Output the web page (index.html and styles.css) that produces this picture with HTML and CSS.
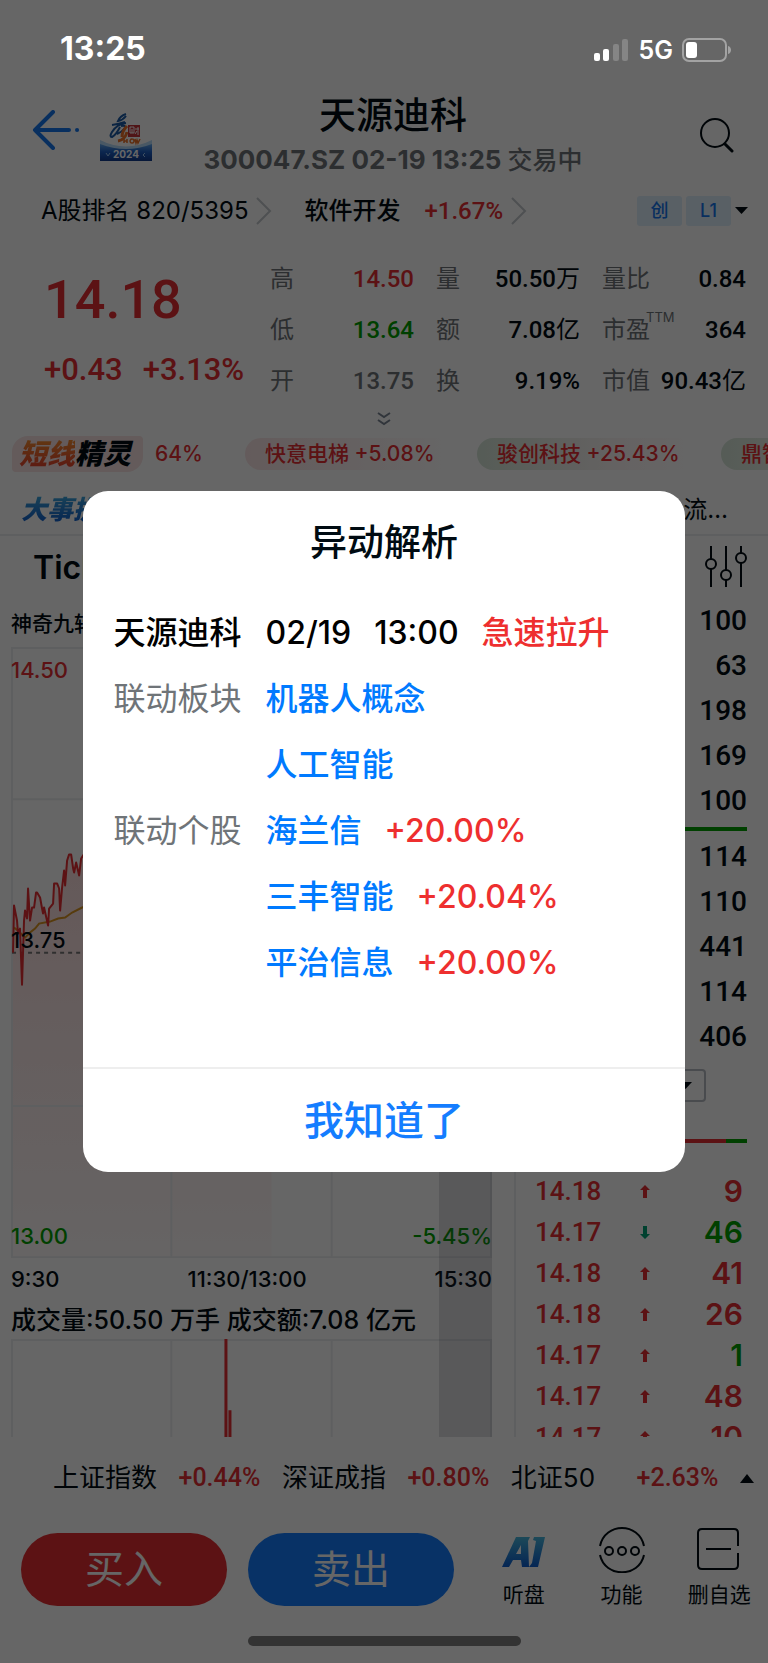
FILE: index.html
```html
<!DOCTYPE html>
<html lang="zh-CN">
<head>
<meta charset="utf-8">
<meta name="viewport" content="width=device-width, initial-scale=1">
<title>天源迪科</title>
<link rel="stylesheet" href="styles.css">
</head>
<body>
<div class="app">
  <div class="statusbar">
    <span class="clock">13:25</span>
    <span class="status-icons">
      <svg class="signal" width="36" height="24" viewBox="0 0 36 24"><g fill="#fff"><rect x="0" y="15" width="6" height="8" rx="2"/><rect x="9" y="11" width="6" height="12" rx="2"/></g><g fill="#858585"><rect x="19" y="6" width="6" height="17" rx="2"/><rect x="28" y="1" width="6" height="22" rx="2"/></g></svg>
      <span class="network">5G</span>
      <svg width="50" height="24" viewBox="0 0 50 24"><rect x="1" y="1" width="43" height="22" rx="6" fill="none" stroke="#a3a3a3" stroke-width="2"/><rect x="4" y="4" width="11" height="16" rx="3" fill="#fff"/><path d="M46 8c4 1 4 7 0 8z" fill="#a3a3a3"/></svg>
    </span>
  </div>

  <header class="header">
    <div class="header-left">
      <button class="icon-btn" aria-label="返回"><svg width="50" height="40" viewBox="0 0 50 40" fill="none" stroke="#1677ee" stroke-width="4" stroke-linecap="round" stroke-linejoin="round"><path d="M21 2 3 20l18 18M3 20h34M45 20h.1"/></svg></button>
      <svg class="logo" width="52" height="48" viewBox="0 0 52 48">
        <defs><linearGradient id="lg" x1="0" y1="0" x2="0" y2="1"><stop offset="0" stop-color="#69aef0"/><stop offset=".5" stop-color="#1d5fc4"/><stop offset="1" stop-color="#123a8c"/></linearGradient></defs>
        <path d="M0 30q26 10 52 0v18H0z" fill="url(#lg)"/><path d="M0 27q26 13 52 0v4q-26 10-52 0z" fill="#b7dbfa"/>
        <path d="M26 1q-6 2-8 7 5-1 8-5M12 12q7-1 13-3M26 10q-9 1-14 9-3 5 0 5 4-2 8-10M21 13q5-1 4 2-3 4-8 6" fill="none" stroke="#1d5ba5" stroke-width="2"/>
        <path d="M27 13q-5 5-5 11M18 28q7-1 9-9" fill="none" stroke="#ed7128" stroke-width="3"/>
        <rect x="28" y="12" width="12" height="12" fill="#c9353b"/><path d="M30 14h4v6h-4zM32 16v4M35 16h4M38 14v8M37 18l-2 3" fill="none" stroke="#fff" stroke-width="1"/>
        <path d="M24 26v4M24 28h3M27 26v4M32 26a2 2 0 1 0 .1 0M35 26l1 4 1-3 1 3 2-4" fill="none" stroke="#ed7128" stroke-width="1.500"/>
        <text x="26" y="45" text-anchor="middle" class="logo-year">2024</text><path d="m6 40 2 3 2-3M45 40l-2 2 2 2" stroke="#9cc6f2" fill="none"/>
      </svg>
    </div>
    <div class="heading">
      <h1>天源迪科</h1>
      <p>300047.SZ 02-19 13:25 <span>交易中</span></p>
    </div>
    <div class="header-right"><button class="icon-btn" aria-label="搜索"><svg width="36" height="36" viewBox="0 0 36 36" fill="none" stroke="#000b12"><circle cx="16" cy="16" r="14" stroke-width="2"/><path d="m26 27 7 7" stroke-width="3" stroke-linecap="round"/></svg></button></div>
  </header>

  <div class="rank">
    <a class="link" href="#">A股排名 820/5395</a>
    <svg class="chev" width="16" height="28" viewBox="0 0 16 28"><path d="m1 1 13 13L1 27"/></svg>
    <a class="link sector" href="#">软件开发</a>
    <b class="num red sector-chg">+1.67%</b>
    <svg class="chev" width="16" height="28" viewBox="0 0 16 28"><path d="m1 1 13 13L1 27"/></svg>
    <span class="tags"><span class="tag">创</span><span class="tag">L1</span><svg width="13" height="8" viewBox="0 0 13 8"><path d="M0 0h13L6.500 7z" fill="#000b12"/></svg></span>
  </div>

  <section class="quote">
    <div class="price">
      <strong class="num last">14.18</strong>
      <div class="num change"><span>+0.43</span><span>+3.13%</span></div>
    </div>
    <dl class="stats">
      <dt>高</dt><dd class="num red">14.50</dd><dt>量</dt><dd><span class="num">50.50</span>万</dd><dt>量比</dt><dd class="num">0.84</dd>
      <dt>低</dt><dd class="num green">13.64</dd><dt>额</dt><dd><span class="num">7.08</span>亿</dd><dt>市盈<sup>TTM</sup></dt><dd class="num">364</dd>
      <dt>开</dt><dd class="num grey">13.75</dd><dt>换</dt><dd class="num">9.19%</dd><dt>市值</dt><dd><span class="num">90.43</span>亿</dd>
    </dl>
  </section>
  <div class="expand"><svg width="14" height="14" viewBox="0 0 14 14" fill="none" stroke="#7b8694" stroke-width="2"><path d="m1 1 6 4 6-4M1 8l6 4 6-4"/></svg></div>

  <div class="ticker">
    <span class="spirit"><span><i>短线</i>精灵</span></span>
    <span class="pill first">64%</span>
    <span class="pill pink">快意电梯 +5.08%</span>
    <span class="pill mint">骏创科技 +25.43%</span>
    <span class="pill mint">鼎智</span>
  </div>
  <div class="events"><span class="events-name">大事提醒</span><span class="events-text">流…</span></div>

  <main class="board">
    <section class="chart">
      <h2>Tick</h2>
      <p class="indicator">神奇九转</p>
      <div class="plots">
        <svg class="plot" viewBox="0 0 480 610">
          <defs><linearGradient id="area" x1="0" y1="0" x2="0" y2="1"><stop offset="0" stop-color="#fbdcdc"/><stop offset="1" stop-color="#fffafa"/></linearGradient></defs>
          <path d="M2 305 3 258 6 273 7 286 9 281 11 300 13 273 14 263 16 271 17 241 19 273 21 260 23 260 25 245 29 250 32 266 33 260 37 278 38 261 42 256 43 236 46 236 49 263 51 240 53 223 54 238 56 213 58 207 60 207 63 225 65 215 68 228 70 211 90 190 150 200 260 215V609H2z" fill="url(#area)"/>
          <path d="M1 1h478v608H1zM1 152h478M1 458h478M160 1v608M320 1v608" fill="none" stroke="#eceef0" stroke-width="2"/>
          <path d="M1 305h478" stroke="#777" stroke-width="2" stroke-dasharray="4 4"/>
          <path d="M3 280 7 283 14 290 19 285 24 281 28 276 39 274 47 271 54 270 61 265 71 260 84 256" fill="none" stroke="#d99421" stroke-width="2"/>
          <path d="M2 305 3 258 6 273 7 286 9 281 11 337 13 273 14 263 16 271 17 241 19 273 21 260 23 260 25 245 26 245 29 250 31 261 32 266 33 260 37 278 38 261 42 256 43 236 46 236 48 241 49 263 51 240 53 223 54 238 56 213 58 207 60 207 62 221 63 225 65 215 68 228 70 211 74 205" fill="none" stroke="#e52f33" stroke-width="2" stroke-linejoin="round"/>
        </svg>
        <span class="mark top-left">14.50</span><span class="mark middle">13.75</span><span class="mark bottom-left">13.00</span><span class="mark bottom-right">-5.45%</span>
      </div>
      <div class="axis"><span>9:30</span><span>11:30/13:00</span><span>15:30</span></div>
      <p class="volume-title">成交量:50.50 万手 成交额:7.08 亿元</p>
      <svg class="plot" viewBox="0 0 480 108"><path d="M1 108V1h478v107M160 1v107M320 1v107" fill="none" stroke="#eceef0" stroke-width="2"/><path d="M213 0h3v108h-3zM217 71h3v37h-3z" fill="#e52f33"/></svg>
      <div class="after-hours"></div>
    </section>
    <section class="orders">
      <div class="tools"><button class="icon-btn" aria-label="设置"><svg width="42" height="42" viewBox="0 0 42 42" fill="none" stroke="#000b12" stroke-width="2"><circle cx="6" cy="18" r="5"/><circle cx="21" cy="29" r="5"/><circle cx="36" cy="12" r="5"/><path d="M6 0v13M6 23v18M21 0v24M21 34v7M36 0v7M36 17v24"/></svg></button></div>
      <ul class="depth num"><li>100</li><li>63</li><li>198</li><li>169</li><li>100</li></ul>
      <div class="rule"></div>
      <ul class="depth num"><li>114</li><li>110</li><li>441</li><li>114</li><li>406</li></ul>
      <div class="filter"><button aria-label="切换"><svg width="13" height="8" viewBox="0 0 13 8"><path d="M0 0h13L6.500 7z" fill="#000b12"/></svg></button></div>
      <div class="ratio"></div>
      <table class="trades">
        <tr><td class="num">14.18</td><td><svg class="arrow" viewBox="0 0 10 13"><path d="M5 0l5 5H7v8H3V5H0z"/></svg></td><td>9</td></tr>
        <tr class="sell"><td class="num">14.17</td><td><svg class="arrow" viewBox="0 0 10 13"><path d="M5 13l5-5H7V0H3v8H0z"/></svg></td><td>46</td></tr>
        <tr><td class="num">14.18</td><td><svg class="arrow" viewBox="0 0 10 13"><path d="M5 0l5 5H7v8H3V5H0z"/></svg></td><td>41</td></tr>
        <tr><td class="num">14.18</td><td><svg class="arrow" viewBox="0 0 10 13"><path d="M5 0l5 5H7v8H3V5H0z"/></svg></td><td>26</td></tr>
        <tr><td class="num">14.17</td><td><svg class="arrow" viewBox="0 0 10 13"><path d="M5 0l5 5H7v8H3V5H0z"/></svg></td><td class="green">1</td></tr>
        <tr><td class="num">14.17</td><td><svg class="arrow" viewBox="0 0 10 13"><path d="M5 0l5 5H7v8H3V5H0z"/></svg></td><td>48</td></tr>
        <tr><td class="num">14.17</td><td><svg class="arrow" viewBox="0 0 10 13"><path d="M5 0l5 5H7v8H3V5H0z"/></svg></td><td>10</td></tr>
      </table>
    </section>
  </main>

  <div class="indices">
    <span>上证指数</span><b class="num red">+0.44%</b><span>深证成指</span><b class="num red">+0.80%</b><span class="short-name">北证50</span><b class="num red">+2.63%</b>
    <svg width="14" height="9" viewBox="0 0 14 9"><path d="M0 9h14L7 0z" fill="#000b12"/></svg>
  </div>

  <footer class="actions">
    <button class="trade buy">买入</button>
    <button class="trade short">卖出</button>
    <button class="tool">
      <svg width="46" height="46" viewBox="0 0 46 46"><defs><linearGradient id="ai" x1="0" y1="0" x2="0" y2="1"><stop offset="0" stop-color="#49b7dd"/><stop offset="1" stop-color="#0c5ed2"/></linearGradient></defs><path d="M15 10h14l-2 4 1 26h-7l-1-7h-8l-4 7H1zM20 18l-5 9h5zM33 10h11l-7 30H28l3-4 4-22-3-1z" fill="url(#ai)" fill-rule="evenodd"/></svg>
      听盘</button>
    <button class="tool">
      <svg width="46" height="46" viewBox="0 0 46 46" fill="none" stroke="#000b12" stroke-width="2"><path d="M1 19C6-5 40-5 45 19M1 28c5 23 39 23 44 0"/><circle cx="10" cy="24" r="4"/><circle cx="23" cy="24" r="4"/><circle cx="36" cy="24" r="4"/></svg>
      功能</button>
    <button class="tool">
      <svg width="46" height="46" viewBox="0 0 46 46" fill="none" stroke="#000b12" stroke-width="2"><path d="M42 19V6q0-4-4-4H6Q2 2 2 6v32q0 4 4 4h32q4 0 4-4V26M10 22h25"/></svg>
      删自选</button>
  </footer>
  <div class="home"><span></span></div>

  <div class="scrim">
    <div class="dialog" role="dialog" aria-modal="true" aria-labelledby="dialog-title">
      <h2 id="dialog-title">异动解析</h2>
      <div class="details">
        <span>天源迪科</span><p><span>02/19</span><span>13:00</span><span class="alert">急速拉升</span></p>
        <span class="label">联动板块</span><p><a href="#">机器人概念</a></p>
        <p class="wide"><a href="#">人工智能</a></p>
        <span class="label">联动个股</span><p><a href="#">海兰信</a><span class="alert">+20.00%</span></p>
        <p class="wide"><a href="#">三丰智能</a><span class="alert">+20.04%</span></p>
        <p class="wide"><a href="#">平治信息</a><span class="alert">+20.00%</span></p>
      </div>
      <button class="confirm">我知道了</button>
    </div>
  </div>
</div>
</body>
</html>
```
FILE: styles.css
```css
* { box-sizing: border-box; }
body, h1, h2, p, dl, dd, ul { margin: 0; padding: 0; }
body {
  font-family: Inter, "Noto Sans CJK SC", sans-serif;
  line-height: 1.2;
  color: #000b12;
  background: #fff;
}
button { font: inherit; color: inherit; background: none; border: 0; padding: 0; }
a { color: inherit; text-decoration: none; }
ul { list-style: none; }
svg { display: block; flex: none; }
.num { font-family: Roboto, sans-serif; font-weight: 500; }
.red { color: #e52f33; }
.green { color: #00a000; }
.grey { color: #6f7478; }

.app {
  position: relative;
  display: flex;
  flex-direction: column;
  height: 100vh;
  overflow: hidden;
}

.statusbar {
  position: relative;
  z-index: 2;
  display: flex;
  justify-content: space-between;
  align-items: center;
  height: 96px;
  padding: 3px 36px 0 60px;
  color: #fff;
}
.clock { font-size: 32px; font-weight: 700; }
.status-icons { display: flex; align-items: center; gap: 9px; }
.network { font-size: 25px; font-weight: 600; }

.header { display: grid; grid-template-columns: 158px 1fr 140px; height: 84px; }
.header-left { display: flex; align-items: center; gap: 18px; padding: 0 0 16px 32px; }
.header-left .logo { margin-top: 14px; }
.logo-year { font: 700 10px Inter, sans-serif; fill: #fff; }
.heading { display: flex; flex-direction: column; align-items: center; white-space: nowrap; }
.heading h1 { font-size: 37px; line-height: 40px; font-weight: 500; }
.heading p { padding-top: 6px; font-size: 26px; line-height: 36px; font-weight: 700; color: #6f7478; }
.heading p span { font-size: 25px; font-weight: 500; }
.header-right { display: flex; justify-content: flex-end; align-items: center; padding: 0 33px 6px 0; }

.rank { display: flex; align-items: center; height: 62px; padding: 0 20px 0 41px; font-size: 24px; white-space: nowrap; }
.chev { margin-left: 8px; fill: none; stroke: #c3c8cd; stroke-width: 2; }
.sector { margin-left: 32px; font-weight: 500; }
.sector-chg { margin-left: 24px; }
.tags { display: flex; align-items: center; gap: 4px; margin-left: auto; }
.tag { width: 45px; background: #deeffd; border-radius: 3px; color: #1677ee; text-align: center; font-size: 18px; line-height: 30px; font-weight: 500; }

.quote { display: flex; height: 164px; padding: 12px 22px 0 44px; }
.price { display: flex; flex-direction: column; width: 226px; color: #e52f33; }
.last { padding-top: 6px; font-size: 54px; line-height: 80px; }
.change { display: flex; gap: 20px; padding-top: 4px; font-size: 31px; line-height: 52px; }
.stats { flex: 1; display: grid; grid-template-columns: 24px 120px 46px 120px 70px 1fr; grid-auto-rows: 51px; align-items: center; font-size: 24px; white-space: nowrap; }
.stats dt { position: relative; justify-self: end; color: #6f7478; }
.stats dd { text-align: right; }
.stats sup { position: absolute; left: 44px; top: -5px; font-size: 13px; line-height: 13px; }
.expand { display: flex; justify-content: center; padding: 6px 0 10px; }

.ticker { display: flex; align-items: center; height: 36px; padding-left: 12px; font-size: 21px; font-weight: 500; white-space: nowrap; color: #e52f33; }
.spirit { flex: none; width: 131px; line-height: 36px; padding-left: 7px; background: #f9e3e3; border-radius: 16px 4px 16px 4px; font-size: 28px; font-weight: 900; color: #000b12; }
.spirit span { display: inline-block; font-style: italic; }
.spirit i { color: transparent; background: linear-gradient(#f5912f, #e5382c); background-clip: text; }
.pill { flex: none; display: inline-block; line-height: 32px; padding: 0 20px; border-radius: 16px 0 0 16px; }
.first { width: 88px; padding: 0 0 0 12px; margin-right: 14px; }
.pink { width: 232px; background: linear-gradient(90deg, #fae4e5, #fff 88%); }
.mint { width: 244px; background: linear-gradient(90deg, #d6e6d8, #fdf6f6 60%, #fff 88%); }

.events { display: flex; justify-content: space-between; align-items: center; height: 64px; padding: 15px 40px 1px 21px; border-bottom: 2px solid #eceef0; font-size: 24px; }
.events-name { font-size: 26px; font-style: italic; font-weight: 900; color: transparent; background: linear-gradient(#3fa9dc, #0c55c8); background-clip: text; }

.board { flex: 1; min-height: 0; display: flex; overflow: hidden; }
.chart { position: relative; flex: 1; padding: 0 22px 0 11px; border-right: 2px solid #eceef0; }
.chart h2 { padding-left: 22px; font-size: 32px; line-height: 64px; font-weight: 600; }
.indicator { font-size: 21px; line-height: 47px; font-weight: 500; }
.plots { position: relative; }
.plot { width: 100%; height: auto; }
.mark { position: absolute; font-size: 22px; line-height: 24px; font-weight: 500; }
.top-left { left: 0; top: 11px; color: #e52f33; }
.middle { left: 0; top: 281px; }
.bottom-left { left: 0; bottom: 10px; color: #00a000; }
.bottom-right { right: 0; bottom: 10px; color: #00a000; }
.axis { display: flex; justify-content: space-between; font-size: 22px; line-height: 43px; font-weight: 500; }
.volume-title { font-size: 25px; line-height: 38px; font-weight: 500; white-space: nowrap; }
.after-hours { position: absolute; top: 112px; bottom: 0; right: 22px; width: 53px; background: rgba(70, 70, 95, .18); }

.orders { width: 252px; flex: none; padding: 10px 21px 0 19px; }
.tools { display: flex; justify-content: flex-end; align-items: flex-start; height: 52px; }
.depth { text-align: right; font-size: 28px; line-height: 45px; }
.rule { height: 4px; margin: 4px 0 3px; background: #00a000; }
.filter { display: flex; justify-content: flex-end; padding: 10px 41px 37px 0; }
.filter button { display: flex; justify-content: flex-end; align-items: center; width: 100px; height: 33px; padding-right: 12px; border: 2px solid #b7bcc3; border-radius: 4px; }
.ratio { height: 4px; background: linear-gradient(90deg, #e52f33 90%, #00a000 90%); }
.trades { width: 100%; table-layout: fixed; margin-top: 28px; border-spacing: 0; color: #e52f33; font-size: 30px; line-height: 41px; font-weight: 600; }
.trades td { padding: 0; height: 41px; }
.trades td:first-child { width: 80px; font-size: 26px; }
.trades td:nth-child(2) { width: 60px; }
.trades td:last-child { text-align: right; padding-right: 4px; }
.trades .sell td:last-child, .trades .green { color: #00a000; }
.arrow { width: 10px; height: 13px; margin: 0 auto; fill: #e52f33; }
.sell .arrow { fill: #00a376; }

.indices { display: flex; align-items: center; justify-content: space-between; height: 82px; padding: 0 14px 0 53px; font-size: 26px; white-space: nowrap; }
.indices .num { font-size: 25px; }
.short-name { margin-right: 20px; }

.actions { display: flex; align-items: flex-start; padding: 8px 0 5px 21px; }
.trade { width: 206px; height: 73px; margin: 6px 21px 0 0; border-radius: 37px; color: #fff; font-size: 39px; }
.buy { background: #e52f33; }
.short { background: #147dff; }
.tool { flex: 1; display: flex; flex-direction: column; align-items: center; gap: 8px; font-size: 21px; line-height: 28px; white-space: nowrap; }
.home { display: flex; justify-content: center; padding: 22px 0 17px; }
.home span { width: 273px; height: 10px; border-radius: 5px; background: #808080; }

.scrim { position: absolute; inset: 0; z-index: 1; display: flex; align-items: center; justify-content: center; background: rgba(0, 0, 0, .6); }
.dialog { width: 78.500%; background: #fff; border-radius: 25px; overflow: hidden; }
.dialog h2 { padding: 25px 0 27px; text-align: center; font-size: 37px; line-height: 54px; font-weight: 500; }
.details { display: grid; grid-template-columns: 152px 1fr; grid-auto-rows: 66px; padding: 3px 31px 71px; color: #000; font-size: 32px; line-height: 66px; font-weight: 500; white-space: nowrap; }
.details p { display: flex; align-items: baseline; gap: 23px; }
.details .wide { grid-column: 2; }
.details a { color: #007aff; }
.details .label { color: #6f7478; font-weight: 400; }
.details .alert { color: #ee2f2f; }
.confirm { width: 100%; height: 105px; border-top: 2px solid #eee; color: #147dff; font-size: 40px; font-weight: 500; }
```
